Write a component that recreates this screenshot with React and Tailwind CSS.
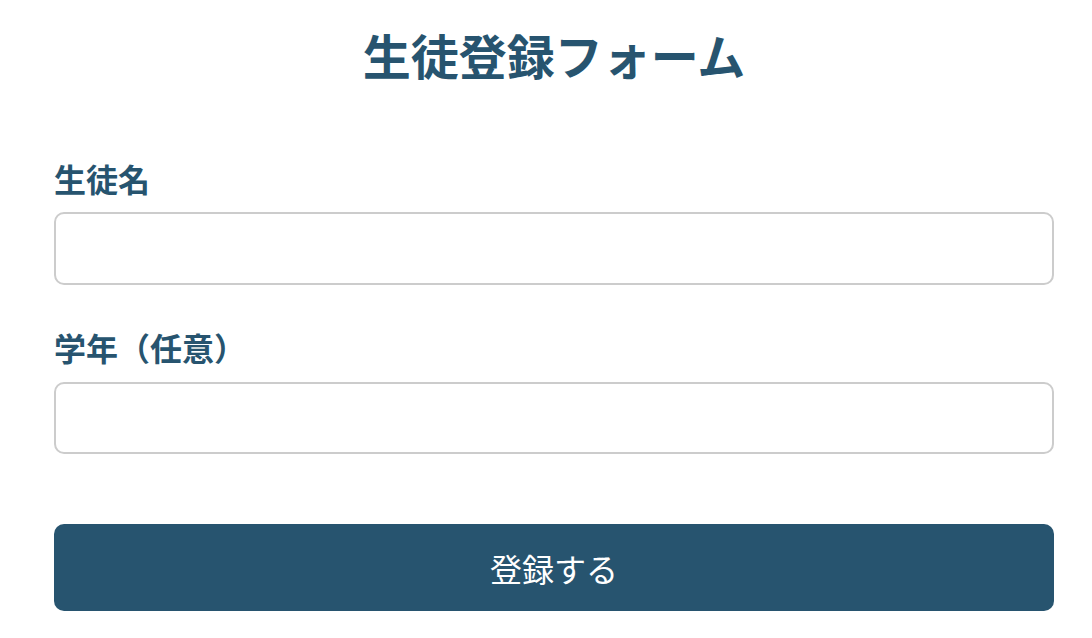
export default function App() {
  const font = { fontFamily: '"Noto Sans CJK JP", "Noto Sans", sans-serif' };
  return (
    <div className="min-h-screen bg-white" style={font}>
      <div className="ml-[54px] w-[1000px] pt-[25px]">
        <h1 className="text-center text-[48px] font-bold leading-[58px] text-[#27546f]">
          生徒登録フォーム
        </h1>

        <form className="mt-[75px]" onSubmit={(e) => e.preventDefault()}>
          <label className="block text-[32px] font-bold leading-[40px] text-[#27546f]">
            生徒名
          </label>
          <input
            type="text"
            className="mt-[14px] block h-[73px] w-full rounded-[10px] border-2 border-[#cccccc] px-4 text-[28px] outline-none"
          />

          <label className="mt-[42px] block text-[32px] font-bold leading-[40px] text-[#27546f]">
            学年（任意）
          </label>
          <input
            type="text"
            className="mt-[15px] block h-[72px] w-full rounded-[10px] border-2 border-[#cccccc] px-4 text-[28px] outline-none"
          />

          <button
            type="submit"
            className="mt-[70px] block h-[87px] w-full rounded-[10px] bg-[#27546f] text-[32px] text-white"
          >
            登録する
          </button>
        </form>
      </div>
    </div>
  );
}
